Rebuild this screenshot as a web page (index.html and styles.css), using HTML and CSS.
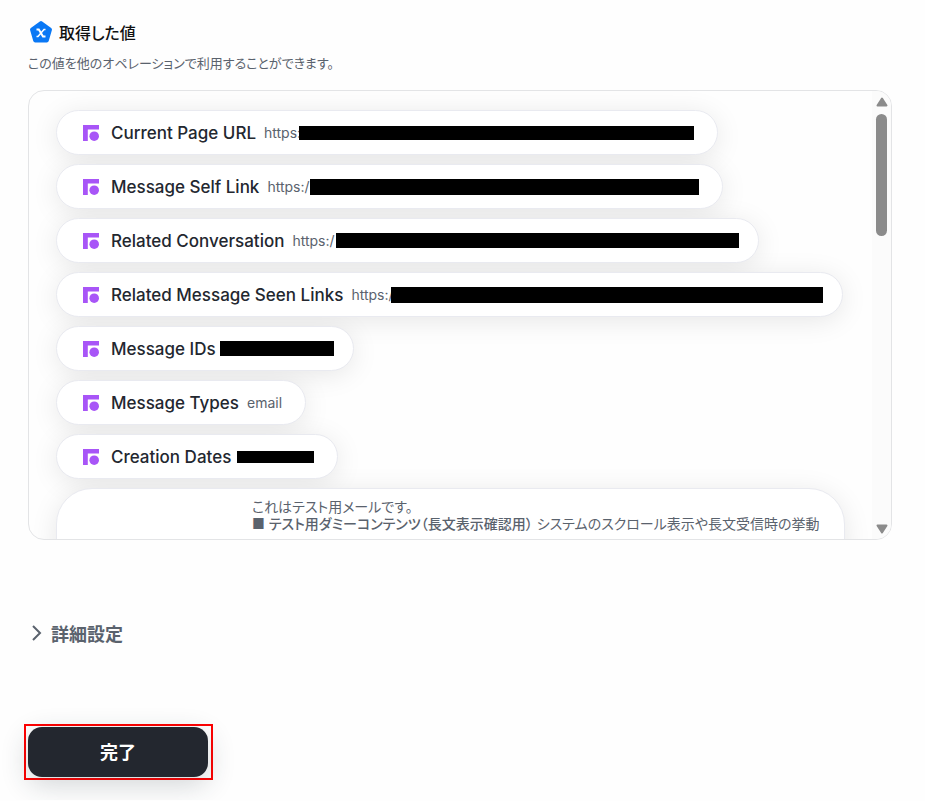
FILE: index.html
```html
<!DOCTYPE html>
<html lang="ja">
<head>
  <meta charset="UTF-8" />
  <title>取得した値</title>
  <link rel="stylesheet" href="styles.css">
</head>
<body>
  <svg class="defs" aria-hidden="true">
    <symbol id="app" viewBox="0 0 16 16">
      <path d="M0 0h16v4.500H4.800V16H0z" />
      <circle cx="11.200" cy="11.200" r="4.800" />
    </symbol>
  </svg>

  <header class="head">
    <h1>
      <svg class="logo" viewBox="0 0 24 24" aria-hidden="true">
        <path d="M12 3 21 9.500 17.800 20.500H6.200L3 9.500z" fill="#0a78f5" stroke="#0a78f5" stroke-width="4" stroke-linejoin="round" />
        <path d="M7.500 9.500h2.300l4.200 7h2.500" fill="none" stroke="#fff" stroke-width="2" />
        <path d="M16.500 9.500h-1.500L9 16.500H7.500" fill="none" stroke="#fff" stroke-width="1.500" />
      </svg>
      取得した値
    </h1>
    <p>この値を他のオペレーションで利用することができます。</p>
  </header>

  <section class="panel">
    <ul class="list">
      <li class="pill page-url"><svg class="icon"><use href="#app" /></svg><b>Current Page URL</b><span class="value">https:</span><i class="mask"></i></li>
      <li class="pill self-link"><svg class="icon"><use href="#app" /></svg><b>Message Self Link</b><span class="value">https:/</span><i class="mask"></i></li>
      <li class="pill conversation"><svg class="icon"><use href="#app" /></svg><b>Related Conversation</b><span class="value">https:/</span><i class="mask"></i></li>
      <li class="pill seen-links"><svg class="icon"><use href="#app" /></svg><b>Related Message Seen Links</b><span class="value">https:/</span><i class="mask"></i></li>
      <li class="pill ids"><svg class="icon"><use href="#app" /></svg><b>Message IDs</b><i class="mask"></i></li>
      <li class="pill types"><svg class="icon"><use href="#app" /></svg><b>Message Types</b><span class="value">email</span></li>
      <li class="pill dates"><svg class="icon"><use href="#app" /></svg><b>Creation Dates</b><i class="mask"></i></li>
      <li class="pill body">
        <p>これはテスト用メールです。<br>■ <strong>テスト用ダミーコンテンツ（長文表示確認用）</strong> システムのスクロール表示や長文受信時の挙動</p>
      </li>
    </ul>
    <div class="scrollbar" aria-hidden="true">
      <svg class="arrow" viewBox="0 0 12 10"><path d="M6 1.500 10.500 8.500h-9z" /></svg>
      <div class="thumb"></div>
      <svg class="arrow" viewBox="0 0 12 10"><path d="M6 8.500 10.500 1.500h-9z" /></svg>
    </div>
  </section>

  <button type="button" class="advanced">
    <svg viewBox="0 0 10 16" aria-hidden="true"><path d="M1 1l7 7-7 7" /></svg>
    詳細設定
  </button>

  <div class="highlight">
    <button type="button" class="done">完了</button>
  </div>
</body>
</html>
```

FILE: styles.css
```css
* {
  box-sizing: border-box;
}

body {
  margin: 0;
  padding: 20px 33px 20px 28px;
  background: #fefefe;
  color: #23272f;
  font-family: Inter, "Noto Sans CJK JP", sans-serif;
  font-feature-settings: "palt";
}

.defs {
  position: absolute;
  width: 0;
  height: 0;
}

.head h1 {
  display: flex;
  align-items: center;
  gap: 6px;
  margin: 0;
  padding-left: 1px;
  height: 24px;
  font-size: 16px;
  font-weight: 500;
  color: #111;
}

.logo {
  width: 24px;
  height: 24px;
}

.head p {
  margin: 10px 0 0;
  font-size: 13px;
  line-height: 18px;
  color: #5a626d;
}

.panel {
  display: flex;
  height: 450px;
  margin-top: 18px;
  border: 1px solid #e3e4e6;
  border-radius: 16px;
  overflow: hidden;
}

.list {
  flex: 1;
  display: flex;
  flex-direction: column;
  align-items: flex-start;
  gap: 9px;
  margin: 0;
  padding: 19px 27px;
  list-style: none;
  overflow: hidden;
  isolation: isolate;
}

.pill {
  position: relative;
  display: flex;
  flex-shrink: 0;
  align-items: center;
  height: 45px;
  padding: 0 23px 0 26px;
  border: 1px solid #e9eaf0;
  border-radius: 36px;
  background: #fff;
  white-space: nowrap;
}

/* the shadow stays under the neighbouring pills */
.pill::before {
  content: "";
  position: absolute;
  inset: 0;
  z-index: -1;
  border-radius: inherit;
  box-shadow: 0 4px 28px rgba(0, 0, 0, 0.1);
}

.icon {
  flex-shrink: 0;
  width: 16px;
  height: 16px;
  margin-right: 12px;
  fill: #a855f7;
}

.pill b {
  flex-shrink: 0;
  font-size: 17px;
  font-weight: 500;
}

.value {
  min-width: 0;
  margin-left: 8px;
  font-size: 14px;
  color: #5a626d;
}

.mask {
  flex-shrink: 0;
  margin-left: auto;
  background: #000;
}

.page-url { width: 662px; }
.page-url .mask { width: 395px; height: 14px; }
.self-link { width: 667px; }
.self-link .mask { width: 389px; height: 16px; }
.conversation { width: 703px; padding-right: 19px; }
.conversation .mask { width: 403px; height: 15px; }
.seen-links { width: 787px; padding-right: 19px; }
.seen-links .mask { width: 432px; height: 16px; }
.ids { width: 298px; padding-right: 19px; }
.ids .mask { width: 114px; height: 15px; }
.dates { width: 282px; }
.dates .mask { width: 77px; height: 12px; }

.pill.body {
  align-items: flex-start;
  height: 120px;
  padding: 9px 25px 9px 195px;
}

.body p {
  margin: 0;
  font-size: 14px;
  line-height: 17px;
  color: #5a626d;
}

.body strong {
  font-weight: 500;
}

.scrollbar {
  display: flex;
  flex-direction: column;
  align-items: center;
  width: 19px;
  padding: 6px 0 5px;
  background: #fbfbfb;
}

.arrow {
  width: 12px;
  height: 10px;
  fill: #8b8b8b;
  stroke: #8b8b8b;
  stroke-width: 2;
  stroke-linejoin: round;
}

.thumb {
  width: 11px;
  height: 122px;
  margin: 7px 0 auto;
  border-radius: 6px;
  background: #8b8b8b;
}

.advanced {
  display: flex;
  align-items: center;
  gap: 9px;
  margin-top: 79px;
  padding: 0 4px;
  height: 28px;
  border: none;
  background: none;
  color: #5a626d;
  font: inherit;
  font-size: 18px;
  font-weight: 600;
}

.advanced svg {
  width: 10px;
  height: 16px;
  fill: none;
  stroke: #5a626d;
  stroke-width: 2;
}

.highlight {
  width: 189px;
  margin: 77px 0 0 -4px;
  padding: 1px 3px 1px 2px;
  border: 2px solid #f00;
}

.done {
  display: block;
  width: 180px;
  height: 50px;
  padding: 0 0 2px;
  border: none;
  border-radius: 14px;
  background: #23272f;
  color: #fff;
  font: inherit;
  font-size: 18px;
  font-weight: 700;
  box-shadow: 0 8px 28px rgba(35, 50, 60, 0.2);
}
```
